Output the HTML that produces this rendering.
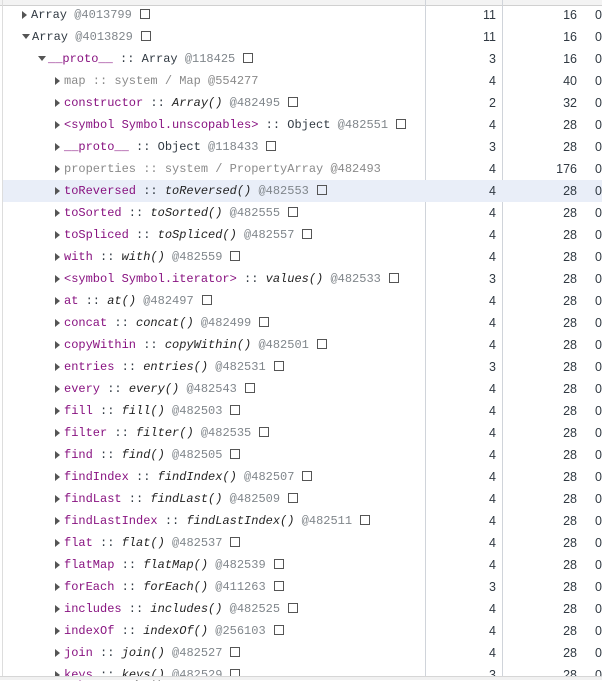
<!DOCTYPE html><html><head><style>
body{margin:0;width:602px;height:679px;overflow:hidden;background:#fff;position:relative;font-family:"Liberation Mono",monospace;font-size:12px;color:#303942}
.top{position:absolute;left:0;top:0;width:602px;height:5px;background:#f3f3f3;border-bottom:1px solid #d0d0d0}
.vl{position:absolute;top:0;bottom:0;width:1px;background:#d0d4da}
.row{position:absolute;left:3px;width:599px;height:22px;line-height:22px;white-space:nowrap}
.row.sel{background:#e9eef8}
.n{position:absolute;left:0}
.tri{display:inline-block;width:0;height:0;border-top:4px solid transparent;border-bottom:4px solid transparent;border-left:5px solid #555;margin-right:4px;vertical-align:-1px}
.tri.d{border-left:4px solid transparent;border-right:4px solid transparent;border-top:5px solid #555;border-bottom:0;margin-right:2px;vertical-align:1px}
.p{color:#881280}.g{color:#8a8a8a}.a{color:#80868b}i{font-style:italic;color:#222}
.box{display:inline-block;width:8px;height:8px;border:1px solid #555;margin-left:8px;vertical-align:-1px}
.c1,.c2,.c3{position:absolute;font-family:"Liberation Sans",sans-serif;font-size:12.5px;color:#303942}
.c1{right:106px}.c2{right:25px}.c3{left:592px}
.bot{position:absolute;left:0;top:676px;width:602px;height:3px;background:#f1f1f1;border-top:1px solid #d6d6d6}
</style></head><body>
<div class="top"></div>
<div class="vl" style="left:425px"></div>
<div class="vl" style="left:502px"></div>
<div id="rows"></div>
<script>
var R=[
[0,'',"Array <span class=a>@4013799</span>",1,11,16,0],
[0,'d',"Array <span class=a>@4013829</span>",1,11,16,0],
[1,'d',"<span class=p>__proto__</span> :: Array <span class=a>@118425</span>",1,3,16,0],
[2,'',"<span class=g>map :: system / Map @554277</span>",0,4,40,0],
[2,'',"<span class=p>constructor</span> :: <i>Array()</i> <span class=a>@482495</span>",1,2,32,0],
[2,'',"<span class=p>&lt;symbol Symbol.unscopables&gt;</span> :: Object <span class=a>@482551</span>",1,4,28,0],
[2,'',"<span class=p>__proto__</span> :: Object <span class=a>@118433</span>",1,3,28,0],
[2,'',"<span class=g>properties :: system / PropertyArray @482493</span>",0,4,176,0],
[2,'',"<span class=p>toReversed</span> :: <i>toReversed()</i> <span class=a>@482553</span>",1,4,28,1],
[2,'',"<span class=p>toSorted</span> :: <i>toSorted()</i> <span class=a>@482555</span>",1,4,28,0],
[2,'',"<span class=p>toSpliced</span> :: <i>toSpliced()</i> <span class=a>@482557</span>",1,4,28,0],
[2,'',"<span class=p>with</span> :: <i>with()</i> <span class=a>@482559</span>",1,4,28,0],
[2,'',"<span class=p>&lt;symbol Symbol.iterator&gt;</span> :: <i>values()</i> <span class=a>@482533</span>",1,3,28,0],
[2,'',"<span class=p>at</span> :: <i>at()</i> <span class=a>@482497</span>",1,4,28,0],
[2,'',"<span class=p>concat</span> :: <i>concat()</i> <span class=a>@482499</span>",1,4,28,0],
[2,'',"<span class=p>copyWithin</span> :: <i>copyWithin()</i> <span class=a>@482501</span>",1,4,28,0],
[2,'',"<span class=p>entries</span> :: <i>entries()</i> <span class=a>@482531</span>",1,3,28,0],
[2,'',"<span class=p>every</span> :: <i>every()</i> <span class=a>@482543</span>",1,4,28,0],
[2,'',"<span class=p>fill</span> :: <i>fill()</i> <span class=a>@482503</span>",1,4,28,0],
[2,'',"<span class=p>filter</span> :: <i>filter()</i> <span class=a>@482535</span>",1,4,28,0],
[2,'',"<span class=p>find</span> :: <i>find()</i> <span class=a>@482505</span>",1,4,28,0],
[2,'',"<span class=p>findIndex</span> :: <i>findIndex()</i> <span class=a>@482507</span>",1,4,28,0],
[2,'',"<span class=p>findLast</span> :: <i>findLast()</i> <span class=a>@482509</span>",1,4,28,0],
[2,'',"<span class=p>findLastIndex</span> :: <i>findLastIndex()</i> <span class=a>@482511</span>",1,4,28,0],
[2,'',"<span class=p>flat</span> :: <i>flat()</i> <span class=a>@482537</span>",1,4,28,0],
[2,'',"<span class=p>flatMap</span> :: <i>flatMap()</i> <span class=a>@482539</span>",1,4,28,0],
[2,'',"<span class=p>forEach</span> :: <i>forEach()</i> <span class=a>@411263</span>",1,3,28,0],
[2,'',"<span class=p>includes</span> :: <i>includes()</i> <span class=a>@482525</span>",1,4,28,0],
[2,'',"<span class=p>indexOf</span> :: <i>indexOf()</i> <span class=a>@256103</span>",1,4,28,0],
[2,'',"<span class=p>join</span> :: <i>join()</i> <span class=a>@482527</span>",1,4,28,0],
[2,'',"<span class=p>keys</span> :: <i>keys()</i> <span class=a>@482529</span>",1,3,28,0]
];
var h='',L=[19,35,52];
R.forEach(function(r,i){
h+='<div class="row'+(r[6]?' sel':'')+'" style="top:'+(4+22*i)+'px"><span class=n style="left:'+L[r[0]]+'px"><span class="tri '+r[1]+'"></span>'+r[2]+(r[3]?'<span class=box></span>':'')+'</span><span class=c1>'+r[4]+'</span><span class=c2>'+r[5]+'</span><span class=c3>0</span></div>';
});
document.getElementById('rows').innerHTML=h;
</script>
<div class="vl" style="left:2px;background:#ddd"></div>
<div class="bot"></div>
</body></html>
